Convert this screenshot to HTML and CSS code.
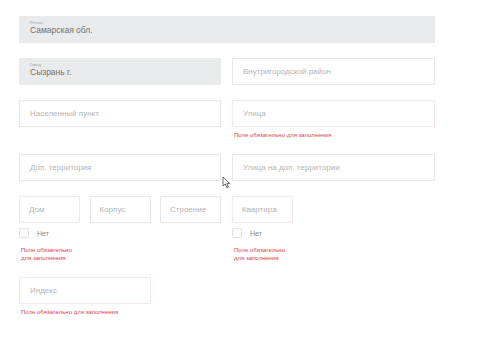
FILE: index.html
```html
<!DOCTYPE html>
<html lang="ru">

<head>
  <meta charset="UTF-8">
  <title>Адрес</title>
  <link rel="stylesheet" href="styles.css">
</head>

<body>
  <form class="address-form">
    <div class="field field-filled field-wide">
      <span class="field-label">Регион</span>
      <span class="field-value">Самарская обл.</span>
    </div>

    <div class="row">
      <div class="field field-filled">
        <span class="field-label">Город</span>
        <span class="field-value">Сызрань г.</span>
      </div>
      <div class="field">Внутригородской район</div>
    </div>

    <div class="row">
      <div class="field">Населенный пункт</div>
      <div class="cell">
        <div class="field field-error">Улица</div>
        <p class="error-text">Поле обязательно для заполнения</p>
      </div>
    </div>

    <div class="row">
      <div class="field">Доп. территория</div>
      <div class="field">Улица на доп. территории</div>
    </div>

    <div class="row">
      <div class="house-group">
        <div class="cell">
          <div class="field field-small field-error">Дом</div>
          <label class="check"><span class="check-box"></span>Нет</label>
          <p class="error-text">Поле обязательно<br>для заполнения</p>
        </div>
        <div class="field field-small">Корпус</div>
        <div class="field field-small">Строение</div>
      </div>
      <div class="cell">
        <div class="field field-small field-error">Квартира</div>
        <label class="check"><span class="check-box"></span>Нет</label>
        <p class="error-text">Поле обязательно<br>для заполнения</p>
      </div>
    </div>

    <div class="cell">
      <div class="field field-index field-error">Индекс</div>
      <p class="error-text">Поле обязательно для заполнения</p>
    </div>
  </form>

  <!-- курсор мыши -->
  <svg class="cursor" width="9" height="13" viewBox="0 0 9 13">
    <path d="M1 1 L1 10 L3.3 8 L5 11.8 L6.4 11.2 L4.8 7.6 L7.8 7.6 Z" fill="#fff" stroke="#444" stroke-width="0.8" stroke-linejoin="round" />
  </svg>
</body>

</html>
```

FILE: styles.css
```css
body {
  margin: 0;
  background: #fff;
  font-family: "Liberation Sans", Arial, sans-serif;
  position: relative;
}

.address-form {
  display: flex;
  flex-direction: column;
  align-items: flex-start;
  gap: 15px;
  padding: 16px 0 0 19px;
}

.row {
  display: grid;
  grid-template-columns: 202px 203px;
  column-gap: 11px;
}

.cell {
  display: flex;
  flex-direction: column;
}

.field {
  box-sizing: border-box;
  height: 27px;
  border: 1px solid #e6e6e6;
  padding: 0 10px;
  display: flex;
  align-items: center;
  font-size: 8px;
  color: #b4b4b4;
}

.field-filled {
  background: #e8eaeb;
  border-color: #e8eaeb;
  flex-direction: column;
  align-items: flex-start;
  justify-content: center;
}

.field-wide {
  width: 416px;
}

.field-label {
  font-size: 4px;
  color: #a4a4a4;
  line-height: 5px;
  margin-top: -3px;
}

.field-value {
  font-size: 8.5px;
  color: #727272;
  line-height: 11px;
}

.field-error {
  border-color: #f6e6e8;
}

.field-small {
  width: 61px;
  padding: 0 9px;
}

.field-index {
  width: 132px;
}

.house-group {
  display: flex;
  justify-content: space-between;
  align-items: flex-start;
}

.check {
  display: flex;
  align-items: center;
  gap: 8px;
  margin-top: 5px;
  font-size: 7px;
  color: #888;
}

.check-box {
  width: 10px;
  height: 10px;
  box-sizing: border-box;
  border: 1px solid #e0e0e0;
  border-radius: 2px;
}

.error-text {
  margin: 4px 0 0 2px;
  font-size: 6px;
  line-height: 8px;
  color: #d6434e;
}

.check + .error-text {
  margin-top: 8px;
}

.cursor {
  position: absolute;
  left: 222px;
  top: 176px;
}
```
